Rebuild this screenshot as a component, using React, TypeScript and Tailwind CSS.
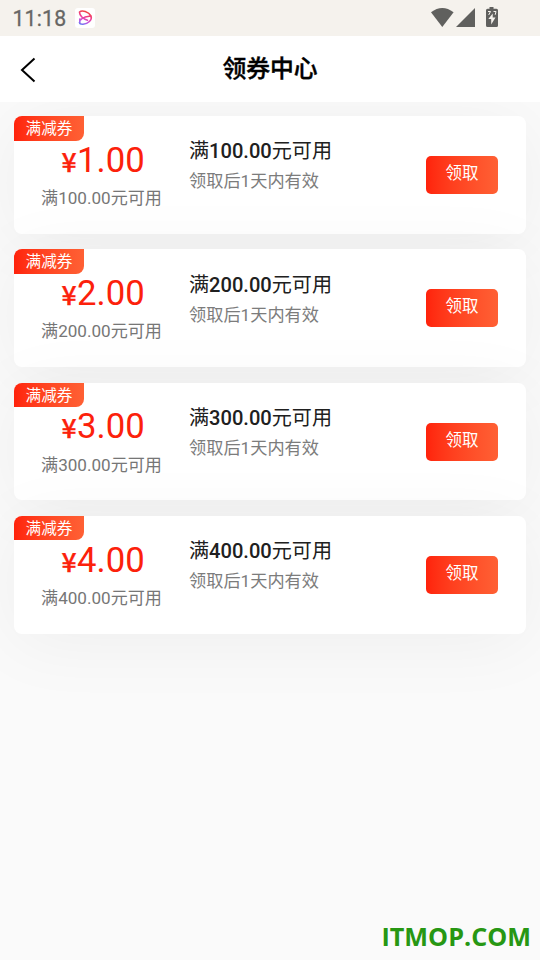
const coupons = ["100.00", "200.00", "300.00", "400.00"];

function StatusBar() {
  return (
    <div className="flex h-9 items-center bg-[#f5f2ed] pl-[12.5px] text-[#666664]">
      <span className="w-[62.5px] pt-px text-[21.2px] leading-none font-normal tracking-[0.2px] [-webkit-text-stroke:0.3px_#666664]">11:18</span>
      <span className="flex size-5 items-center justify-center rounded-[3px] bg-white">
        <svg width="20" height="20" viewBox="0 0 20 20" fill="none" strokeWidth="1.6" strokeLinecap="round">
          <defs>
            <linearGradient id="loop" x1="12" y1="3" x2="7" y2="17" gradientUnits="userSpaceOnUse">
              <stop stopColor="#f04438" />
              <stop offset=".45" stopColor="#f0409a" />
              <stop offset=".75" stopColor="#c058e8" />
              <stop offset="1" stopColor="#627cf0" />
            </linearGradient>
          </defs>
          <path
            d="M4.500 4C7 1.800 13.500 3.500 16 8C17.500 12 13 16 8 16.300C3.500 16.500 3.500 13 6.500 11C9 9 13 8 15.800 8.300M4.500 4.300C4.500 7.500 8 11 12.500 12.200M4.800 11V15.500"
            stroke="url(#loop)"
          />
        </svg>
      </span>
      <svg className="ml-auto text-[#60605e]" width="109" height="36" viewBox="0 0 109 36" fill="currentColor">
        <path d="M0 12.3Q11.3 3.8 22.6 12.3L11.3 27Z" />
        <path d="M44 8V27H25Z" />
        <path
          fillRule="evenodd"
          d="M58.500 7H62.500V8.700H65.500Q67 8.700 67 10.200V25.500Q67 27 65.500 27H56.500Q55 27 55 25.500V10.200Q55 8.700 56.500 8.700H58.500ZM61.700 13.500L57.300 19H60.200V24.500L64.500 17.500H61.700Z"
        />
        <path d="M57 11.500H59.500L57.700 15M62.500 11.500H65L64.200 14.800" stroke="#f5f2ed" strokeWidth="1" fill="none" />
      </svg>
    </div>
  );
}

function Coupon({ amount, threshold }: { amount: number; threshold: string }) {
  return (
    <div className="relative flex h-[117.6px] rounded-lg bg-white shadow-[0_8px_72px_rgba(0,0,0,0.05)]">
      <span className="absolute top-0 left-0 h-[24.5px] w-[70px] rounded-tl-lg rounded-br-lg bg-linear-to-r from-[#ff220b] to-[#ff6034] pt-px text-center text-[15.6px] leading-[25px] text-white">
        满减券
      </span>
      <div className="w-[175px] pt-[24.6px] text-center">
        <div className="flex items-baseline justify-center pl-[3px] text-[34.7px] leading-[38px] text-[#fc210b]">
          <span className="mr-[0.5px] font-['Noto_Sans_CJK_SC',sans-serif] text-[26.5px] leading-none font-medium [-webkit-text-stroke:0.3px_#fc210b]">¥</span>
          {amount}.00
        </div>
        <div className="mt-[7.4px] text-[17.1px] leading-6 text-[#767676]">满{threshold}元可用</div>
      </div>
      <div className="flex-1 pt-[21.2px]">
        <div className="text-[20.1px] leading-[29px] text-[#202020]">
          满<span className="font-medium">{threshold}</span>元可用
        </div>
        <div className="mt-[3px] text-[17.2px] leading-6 text-[#7c7c7c]">领取后1天内有效</div>
      </div>
      <button className="mt-10 mr-7 h-[38px] w-[72px] rounded-[5px] bg-linear-to-r from-[#ff220b] to-[#ff6034] pb-[2px] text-[16.5px] leading-[36px] text-white">
        领取
      </button>
    </div>
  );
}

export default function App() {
  return (
    <div className="flex h-[960px] w-[540px] flex-col overflow-hidden bg-[#fafafa] font-[Roboto,'Noto_Sans_CJK_SC',sans-serif]">
      <StatusBar />
      <header className="z-10 grid h-[66px] grid-cols-[60px_1fr_60px] items-center bg-white">
        <svg width="60" height="66" viewBox="0 0 60 66" fill="none" stroke="#000" strokeWidth="2">
          <path d="M34.500 22.500L22 34L34.500 45.500" />
        </svg>
        <h1 className="pb-px text-center text-[23.8px] leading-9 font-medium text-black [-webkit-text-stroke:0.4px_#000]">领券中心</h1>
      </header>
      <main className="flex flex-1 flex-col gap-[15.667px] px-3.5 pt-[14.2px]">
        {coupons.map((threshold, i) => (
          <Coupon key={threshold} amount={i + 1} threshold={threshold} />
        ))}
      </main>
      <footer className="pr-[9px] pb-[7px] text-right font-['Open_Sans','Noto_Sans',sans-serif] text-[25.2px] leading-[34px] font-bold text-[#279713]">
        ITMOP.COM
      </footer>
    </div>
  );
}
